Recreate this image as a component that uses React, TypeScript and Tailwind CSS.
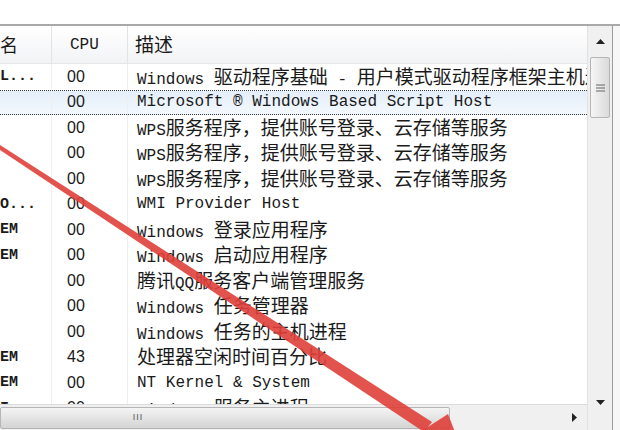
import React from "react";

type Row = { n: string; c: string; d: string; sel?: boolean };

const rows: Row[] = [
  { n: "L...", c: "00", d: "Windows 驱动程序基础 - 用户模式驱动程序框架主机进程" },
  { n: "", c: "00", d: "Microsoft ® Windows Based Script Host", sel: true },
  { n: "", c: "00", d: "WPS服务程序，提供账号登录、云存储等服务" },
  { n: "", c: "00", d: "WPS服务程序，提供账号登录、云存储等服务" },
  { n: "", c: "00", d: "WPS服务程序，提供账号登录、云存储等服务" },
  { n: "O...", c: "00", d: "WMI Provider Host" },
  { n: "EM", c: "00", d: "Windows 登录应用程序" },
  { n: "EM", c: "00", d: "Windows 启动应用程序" },
  { n: "", c: "00", d: "腾讯QQ服务客户端管理服务" },
  { n: "", c: "00", d: "Windows 任务管理器" },
  { n: "", c: "00", d: "Windows 任务的主机进程" },
  { n: "EM", c: "43", d: "处理器空闲时间百分比" },
  { n: "EM", c: "00", d: "NT Kernel & System" },
  { n: "I", c: "00", d: "Windows 服务主进程" },
];

// latin runs stay mono, CJK runs get a wider sans
const Mixed: React.FC<{ text: string }> = ({ text }) => {
  const parts = text.split(/([\u3000-\u303f\u4e00-\u9fff\uff00-\uffef]+)/);
  return (
    <span className="whitespace-pre">
      {parts.map((p, i) =>
        i % 2 ? (
          <span key={i} className="font-['Noto_Sans_CJK_SC',sans-serif] text-[19px]">
            {p}
          </span>
        ) : (
          <span key={i}>{p}</span>
        )
      )}
    </span>
  );
};

const App: React.FC = () => {
  return (
    <div className="relative w-[620px] h-[430px] overflow-hidden bg-white">
      <div className="h-[24px] bg-white" />
      <div className="flex h-[406px] border-t-2 border-[#a9a9a9]">
        {/* list + horizontal bar */}
        <div className="flex flex-col w-[587px]">
          <div className="h-[380px] overflow-hidden font-['Liberation_Mono',monospace] text-[16px] text-[#1a1a1a]">
            {/* header */}
            <div className="flex h-[38px] items-center bg-gradient-to-b from-white to-[#f2f3f5] border-b border-[#e6e6e6]">
              <div className="w-[52px] h-full flex items-center border-r border-[#e3e3e3] font-['Noto_Sans_CJK_SC',sans-serif] text-[18px]">
                名
              </div>
              <div className="w-[76px] h-full flex items-center pl-[18px] border-r border-[#e3e3e3] text-[16px]">
                CPU
              </div>
              <div className="flex-1 h-full flex items-center pl-[7px] font-['Noto_Sans_CJK_SC',sans-serif] text-[19px]">
                描述
              </div>
            </div>
            {rows.map((r, i) => (
              <div
                key={i}
                className={
                  r.sel
                    ? "flex h-[25.5px] items-center leading-none whitespace-nowrap bg-gradient-to-b from-[#e4eefa] to-[#f3f8fd] border-y border-dotted border-[#3a3a3a]"
                    : "flex h-[25.5px] items-center leading-none whitespace-nowrap"
                }
              >
                <div className="w-[52px] h-full flex items-center shrink-0 border-r border-[#efefef] font-bold text-[15px]">
                  {r.n}
                </div>
                <div className="w-[76px] h-full flex items-center shrink-0 pl-[15px] border-r border-[#efefef] font-['Liberation_Sans',sans-serif] text-[16px]">
                  {r.c}
                </div>
                <div className="pl-[9px] h-full flex items-center">
                  <Mixed text={r.d} />
                </div>
              </div>
            ))}
          </div>
          {/* horizontal scrollbar */}
          <div className="flex h-[26px] items-center bg-[#f0f0f0] border-t border-[#dcdcdc]">
            <div className="w-[450px] h-[22px] flex items-center justify-center rounded-[2px] border border-[#b5b5b5] bg-gradient-to-b from-[#f4f4f4] to-[#d4d4d4]">
              <span className="-ml-[174px] text-[9px] tracking-[1px] text-[#555] font-['Liberation_Sans',sans-serif]">
                III
              </span>
            </div>
            <div className="flex-1 flex justify-end pr-[10px]">
              <svg width="5" height="9" viewBox="0 0 5 9">
                <path d="M0 0 L5 4.5 L0 9 Z" fill="#222" />
              </svg>
            </div>
          </div>
        </div>
        {/* vertical scrollbar */}
        <div className="w-[25px] flex flex-col bg-[#f0f0f0] border-l border-[#e2e2e2]">
          <div className="h-[31px] flex items-center justify-center">
            <svg width="9" height="5" viewBox="0 0 9 5">
              <path d="M0 5 L4.5 0 L9 5 Z" fill="#222" />
            </svg>
          </div>
          <div className="mx-[2px] h-[61px] flex items-center justify-center rounded-[2px] border border-[#b5b5b5] bg-gradient-to-r from-[#f6f6f6] to-[#dadada]">
            <svg width="9" height="8" viewBox="0 0 9 8">
              <path d="M0 1 H9 M0 4 H9 M0 7 H9" stroke="#666" strokeWidth="1" />
            </svg>
          </div>
          <div className="flex-1" />
          <div className="h-[44px] flex items-start justify-center pt-[14px]">
            <svg width="9" height="5" viewBox="0 0 9 5">
              <path d="M0 0 L4.5 5 L9 0 Z" fill="#222" />
            </svg>
          </div>
        </div>
        <div className="flex-1 border-l border-[#9c9c9c] bg-[#f7f7f7]" />
      </div>

      {/* red arrow drawn over the screenshot */}
      <svg className="absolute inset-0 pointer-events-none" width="620" height="430" viewBox="0 0 620 430">
        <polygon points="0,145 0,150 424,432 432,422" fill="#e0403a" opacity="0.9" />
        <polygon points="414,436 462,450 448,414" fill="#e0403a" opacity="0.9" />
      </svg>
    </div>
  );
};

export default App;
